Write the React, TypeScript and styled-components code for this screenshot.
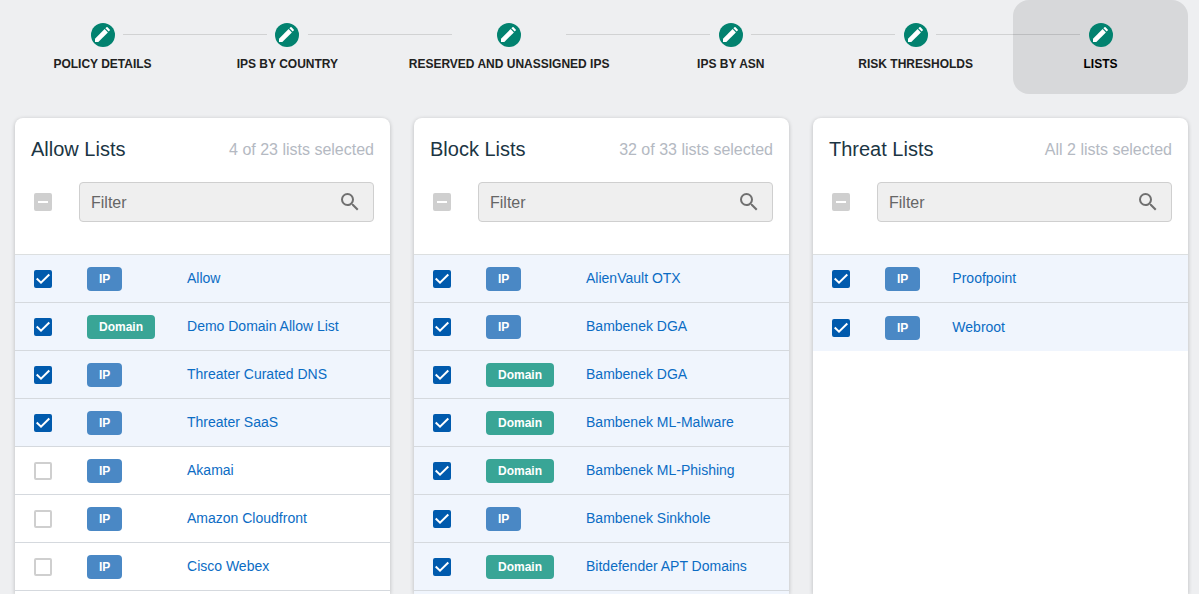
import React, { Fragment, useEffect, useRef, useState } from "react";
import styled, { createGlobalStyle } from "styled-components";
import { MdSearch } from "react-icons/md";

const GlobalStyle = createGlobalStyle`
  *, *::before, *::after { box-sizing: border-box; }
  body {
    margin: 0;
    background: #eeeff1;
    color: #212121;
    font-family: "Liberation Sans", Arial, sans-serif;
    font-size: 14px;
  }
`;

const Page = styled.div`
  display: flex;
  flex-direction: column;
  gap: 24px;
  height: 100vh;
  overflow: hidden;
  padding: 0 11px 0 15px;
`;

const Stepper = styled.nav`
  display: flex;
  align-items: flex-start;
`;

const Step = styled.button<{ $active: boolean }>`
  display: flex;
  flex-direction: column;
  gap: 9px;
  min-width: 175px;
  height: 94px;
  padding: 23px 0 0;
  border: 0;
  border-radius: 16px;
  background: ${(p) => (p.$active ? "#d7d8da" : "transparent")};
  color: ${(p) => (p.$active ? "#000" : "#212121")};
  font-family: inherit;
  font-size: 12px;
  font-weight: 700;
  line-height: 16px;
  text-transform: uppercase;
  white-space: nowrap;
  cursor: pointer;
`;

const StepTrack = styled.span`
  display: flex;
  align-items: center;
  justify-content: space-between;
  width: 100%;
  height: 24px;
`;

const TrackLine = styled.span<{ $visible: boolean }>`
  width: 67px;
  height: 1px;
  margin-bottom: 1px;
  background: ${(p) => (p.$visible ? "rgba(0, 0, 0, 0.12)" : "transparent")};
`;

const Connector = styled.span`
  flex: 1;
  height: 1px;
  margin-top: 34px;
  background: rgba(0, 0, 0, 0.12);
`;

const StepIcon = styled.svg`
  width: 24px;
  height: 24px;
  border-radius: 50%;
  background: #02826f;
  fill: #fff;
`;

const StepLabel = styled.span`
  align-self: center;
  padding: 0 24px;
`;

const Columns = styled.main`
  display: grid;
  grid-template-columns: repeat(3, minmax(0, 1fr));
  gap: 24px;
  flex: 1;
  min-height: 0;
`;

const Card = styled.section`
  display: flex;
  flex-direction: column;
  min-height: 0;
  border-radius: 8px 8px 0 0;
  background: #fff;
  box-shadow: 0 1px 4px rgba(0, 0, 0, 0.22);
`;

const CardHead = styled.header`
  display: flex;
  flex-direction: column;
  gap: 20px;
  padding: 20px 16px 32px;
  border-bottom: 1px solid #dcdfe0;
`;

const TitleRow = styled.div`
  display: flex;
  align-items: flex-start;
  justify-content: space-between;
  height: 24px;
`;

const Title = styled.h2`
  margin: 0;
  color: #1b3543;
  font-size: 20px;
  font-weight: 400;
  line-height: 22px;
`;

const Count = styled.span`
  color: #b4b9c2;
  font-size: 16px;
  line-height: 24px;
`;

const FilterRow = styled.div`
  display: flex;
  align-items: center;
  gap: 27px;
  padding-left: 3px;
`;

const FilterBox = styled.label`
  display: flex;
  flex: 1;
  align-items: center;
  min-width: 0;
  height: 40px;
  padding: 0 11px;
  border: 1px solid #cfcfcf;
  border-radius: 4px;
  background: #efefef;
  color: #707070;
`;

const FilterInput = styled.input`
  flex: 1;
  min-width: 0;
  padding: 2px 0 0;
  border: 0;
  outline: 0;
  background: transparent;
  color: #333;
  font-family: inherit;
  font-size: 16px;
  line-height: 24px;
  &::placeholder { color: #666; opacity: 1; }
`;

const CheckWrap = styled.span`
  display: grid;
  width: 18px;
  height: 18px;
  > * { grid-area: 1 / 1; }
`;

const CheckInput = styled.input`
  appearance: none;
  width: 18px;
  height: 18px;
  margin: 0;
  border: 2px solid #cfcfcf;
  border-radius: 2px;
  background: #fff;
  &:checked { border-color: #005aad; background: #005aad; }
  &:indeterminate { border-color: #cfcfcf; background: #cfcfcf; }
`;

const CheckMark = styled.svg`
  width: 18px;
  height: 18px;
  fill: none;
  stroke: #fff;
  stroke-width: 2;
  pointer-events: none;
`;

const ListTable = styled.table`
  width: 100%;
  border-spacing: 0;
`;

const ListRow = styled.tr<{ $selected: boolean }>`
  background: ${(p) => (p.$selected ? "#f0f5fd" : "#fff")};
`;

const Cell = styled.td<{ $line: boolean }>`
  height: 48px;
  padding: 0;
  border-bottom: ${(p) => (p.$line ? "1px solid #d5d9de" : "0")};
  line-height: 20px;
`;

const CheckCell = styled(Cell)`
  width: 72px;
  padding-left: 19px;
  padding-top: 1px;
`;

const TypeCell = styled(Cell)`
  width: 1px;
  padding-right: 32px;
  padding-top: 1px;
`;

const NameCell = styled(Cell)`
  padding-bottom: 1px;
`;

const Badge = styled.span<{ $kind: Kind }>`
  display: block;
  width: max-content;
  padding: 0 12px;
  border-radius: 4px;
  background: ${(p) => (p.$kind === "IP" ? "#4a88c5" : "#39a596")};
  color: #fff;
  font-size: 12px;
  font-weight: 700;
  line-height: 24px;
`;

const ListLink = styled.a`
  display: block;
  width: max-content;
  color: #0b6cc4;
  font-size: 14px;
  line-height: 20px;
  text-decoration: none;
`;

const Tail = styled.div<{ $selected: boolean }>`
  flex: 1;
  background: ${(p) => (p.$selected ? "#f0f5fd" : "#fff")};
`;

type Kind = "IP" | "Domain";
type Entry = { name: string; kind: Kind; on: boolean };
type Panel = { title: string; count: string; more: boolean; tailOn: boolean; entries: Entry[] };

const entry = (name: string, kind: Kind = "IP", on = true): Entry => ({ name, kind, on });

const steps = [
  "Policy Details",
  "IPs by Country",
  "Reserved and Unassigned IPs",
  "IPs by ASN",
  "Risk Thresholds",
  "Lists",
];

const panels: Panel[] = [
  {
    title: "Allow Lists",
    count: "4 of 23 lists selected",
    more: true,
    tailOn: false,
    entries: [
      entry("Allow"),
      entry("Demo Domain Allow List", "Domain"),
      entry("Threater Curated DNS"),
      entry("Threater SaaS"),
      entry("Akamai", "IP", false),
      entry("Amazon Cloudfront", "IP", false),
      entry("Cisco Webex", "IP", false),
    ],
  },
  {
    title: "Block Lists",
    count: "32 of 33 lists selected",
    more: true,
    tailOn: true,
    entries: [
      entry("AlienVault OTX"),
      entry("Bambenek DGA"),
      entry("Bambenek DGA", "Domain"),
      entry("Bambenek ML-Malware", "Domain"),
      entry("Bambenek ML-Phishing", "Domain"),
      entry("Bambenek Sinkhole"),
      entry("Bitdefender APT Domains", "Domain"),
    ],
  },
  {
    title: "Threat Lists",
    count: "All 2 lists selected",
    more: false,
    tailOn: false,
    entries: [entry("Proofpoint"), entry("Webroot")],
  },
];

function Checkbox({ label, initial }: { label: string; initial: boolean }) {
  const [checked, setChecked] = useState(initial);
  return (
    <CheckWrap>
      <CheckInput
        type="checkbox"
        aria-label={label}
        checked={checked}
        onChange={(e) => setChecked(e.target.checked)}
      />
      {checked && (
        <CheckMark viewBox="0 0 18 18" aria-hidden="true">
          <path d="M2.7 8.5 7 12.7 15.3 4.5" />
        </CheckMark>
      )}
    </CheckWrap>
  );
}

function SelectAll({ label }: { label: string }) {
  const ref = useRef<HTMLInputElement>(null);
  useEffect(() => {
    if (ref.current) ref.current.indeterminate = true;
  }, []);
  return (
    <CheckWrap>
      <CheckInput ref={ref} type="checkbox" aria-label={label} disabled />
      <CheckMark viewBox="0 0 18 18" aria-hidden="true">
        <path d="M4 9H14" />
      </CheckMark>
    </CheckWrap>
  );
}

function ListPanel({ title, count, more, tailOn, entries }: Panel) {
  return (
    <Card>
      <CardHead>
        <TitleRow>
          <Title>{title}</Title>
          <Count>{count}</Count>
        </TitleRow>
        <FilterRow>
          <SelectAll label={`Select all ${title}`} />
          <FilterBox>
            <FilterInput type="text" placeholder="Filter" aria-label={`Filter ${title}`} />
            <MdSearch size={24} aria-hidden="true" />
          </FilterBox>
        </FilterRow>
      </CardHead>
      <ListTable aria-label={title}>
        <tbody>
          {entries.map((e, i) => {
            const line = more || i < entries.length - 1;
            return (
              <ListRow key={i} $selected={e.on}>
                <CheckCell $line={line}>
                  <Checkbox label={e.name} initial={e.on} />
                </CheckCell>
                <TypeCell $line={line}>
                  <Badge $kind={e.kind}>{e.kind}</Badge>
                </TypeCell>
                <NameCell $line={line}>
                  <ListLink href="#">{e.name}</ListLink>
                </NameCell>
              </ListRow>
            );
          })}
        </tbody>
      </ListTable>
      <Tail $selected={tailOn} />
    </Card>
  );
}

export default function App() {
  const last = steps.length - 1;
  return (
    <>
      <GlobalStyle />
      <Page>
        <Stepper aria-label="Policy steps">
          {steps.map((name, i) => (
            <Fragment key={name}>
              {i > 0 && <Connector />}
              <Step type="button" $active={i === last} aria-current={i === last ? "step" : undefined}>
                <StepTrack>
                  <TrackLine $visible={i > 0} />
                  <StepIcon viewBox="0 0 24 24" aria-hidden="true">
                    <path d="M4 15.8 13.6 6.1 16.9 9.4 7.3 19H4.6Q4 19 4 18.4Z" />
                    <path d="M14.4 5.3 15.4 4.3Q16 3.7 16.6 4.3L18.7 6.4Q19.3 7 18.7 7.6L17.7 8.6Z" />
                  </StepIcon>
                  <TrackLine $visible={i < last} />
                </StepTrack>
                <StepLabel>{name}</StepLabel>
              </Step>
            </Fragment>
          ))}
        </Stepper>
        <Columns>
          {panels.map((p) => (
            <ListPanel key={p.title} {...p} />
          ))}
        </Columns>
      </Page>
    </>
  );
}
